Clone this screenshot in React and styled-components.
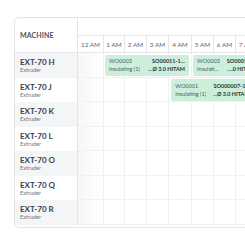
import styled, { createGlobalStyle } from 'styled-components';

const HOURS = ['12 AM', '1 AM', '2 AM', '3 AM', '4 AM', '5 AM', '6 AM', '7 AM', '8 AM', '9 AM'];
const HOUR_WIDTHS = [26, 21, 22, 22, 23, 22, 22, 22, 22, 22];

const MACHINES = ['EXT-70 H', 'EXT-70 J', 'EXT-70 K', 'EXT-70 L', 'EXT-70 O', 'EXT-70 Q', 'EXT-70 R'];

const JOBS = [
  { machine: 'EXT-70 H', start: 1.05, end: 4.87, wo: 'WO0003', op: 'Insulating (1)', so: 'SO00011-1…', item: '…Ø 3.0 HITAM' },
  { machine: 'EXT-70 H', start: 5.05, end: 8.05, wo: 'WO0003', op: 'Insulating (1)', so: 'SO00011-1…', item: '…Ø 3.0 HITAM' },
  { machine: 'EXT-70 J', start: 4.1, end: 7.8, wo: 'WO0001', op: 'Insulating (1)', so: 'SO000007-1…', item: '…Ø 3.0 HITAM' },
];

// hour (fractional) -> px from the left edge of the timeline
const hourToX = (h) => {
  const i = Math.floor(h);
  let x = 0;
  for (let k = 0; k < i; k++) x += HOUR_WIDTHS[k];
  return x + (h - i) * HOUR_WIDTHS[i];
};

const GlobalStyle = createGlobalStyle`
  body {
    margin: 0;
    background: #fff;
    overflow: hidden;
    font-family: Lato, "Noto Sans", sans-serif;
  }
`;

function App() {
  return (
    <>
      <GlobalStyle />
      <Page>
        <Schedule>
          <MachineHead>MACHINE</MachineHead>
          <TimeHead>
            <TopBand />
            <HourRow>
              {HOURS.map((h, i) => (
                <HourCell key={h} $w={HOUR_WIDTHS[i]}>{h}</HourCell>
              ))}
            </HourRow>
          </TimeHead>

          {MACHINES.map((m, idx) => (
            <Row key={m} m={m} striped={idx % 2 === 0} />
          ))}
        </Schedule>
      </Page>
    </>
  );
}

const Row = ({ m, striped }) => (
  <>
    <MachineCell $striped={striped}>
      <MachineName>{m}</MachineName>
      <MachineType>Extruder</MachineType>
    </MachineCell>
    <Lane>
      {HOUR_WIDTHS.map((w, i) => (
        <Slot key={i} $w={w} />
      ))}
      {JOBS.filter((j) => j.machine === m).map((j, i) => (
        <Job
          key={i}
          style={{ left: hourToX(j.start), width: hourToX(j.end) - hourToX(j.start) }}
        >
          <JobCol>
            <JobText>{j.wo}</JobText>
            <JobText>{j.op}</JobText>
          </JobCol>
          <JobCol $right>
            <JobText $bold>{j.so}</JobText>
            {/* cut from the start, so the end of the item name stays readable */}
            <JobText $bold $fromStart>{'\u200E' + j.item}</JobText>
          </JobCol>
        </Job>
      ))}
    </Lane>
  </>
);

export default App;

const Page = styled.div`
  padding: 17px 0 0 14px;
`;

const Schedule = styled.div`
  display: grid;
  grid-template-columns: 63px max-content;
  grid-template-rows: 35px repeat(7, 24.5px);
  width: max-content;
  padding-bottom: 2px;
  border: 1px solid #e1e4e9;
  border-radius: 5px;
  overflow: hidden;
  background: #fff;
`;

const MachineHead = styled.div`
  display: flex;
  align-items: center;
  box-sizing: border-box;
  padding-left: 5px;
  border-right: 1px solid #e1e4e9;
  border-bottom: 1px solid #e5e7eb;
  font-size: 7px;
  font-weight: 700;
  letter-spacing: 0.1px;
  color: #4a5364;
`;

const TimeHead = styled.div`
  display: flex;
  flex-direction: column;
`;

const TopBand = styled.div`
  height: 18px;
  box-sizing: border-box;
  border-bottom: 1px solid #e5e7eb;
`;

const HourRow = styled.div`
  display: flex;
  height: 17px;
  box-sizing: border-box;
  border-bottom: 1px solid #e5e7eb;
`;

const HourCell = styled.div`
  width: ${(p) => p.$w}px;
  flex: none;
  box-sizing: border-box;
  border-right: 1px solid #e5e7eb;
  display: flex;
  align-items: center;
  justify-content: center;
  font-size: 6.4px;
  color: #5b6474;
  white-space: nowrap;
`;

const MachineCell = styled.div`
  box-sizing: border-box;
  padding: 4px 0 0 5px;
  border-right: 1px solid #e1e4e9;
  background: ${(p) => (p.$striped ? '#f4f5f7' : '#fff')};
`;

const MachineName = styled.div`
  font-size: 8px;
  line-height: 10px;
  font-weight: 700;
  color: #364152;
`;

const MachineType = styled.div`
  font-size: 5.5px;
  line-height: 7px;
  color: #6b7280;
`;

const Lane = styled.div`
  position: relative;
  display: flex;
  box-sizing: border-box;
  border-bottom: 1px solid #f0f1f4;
  background: linear-gradient(90deg, rgba(30, 41, 59, 0.04), rgba(30, 41, 59, 0) 26px);
`;

const Slot = styled.div`
  width: ${(p) => p.$w}px;
  flex: none;
  box-sizing: border-box;
  border-right: 1px solid #f0f1f4;
`;

const Job = styled.div`
  position: absolute;
  top: 1.5px;
  height: 21.5px;
  box-sizing: border-box;
  padding: 0 4px;
  display: flex;
  align-items: center;
  justify-content: space-between;
  gap: 6px;
  border-radius: 2px;
  background: #ccefdb;
  overflow: hidden;
`;

const JobCol = styled.div`
  display: flex;
  flex-direction: column;
  min-width: 0;
  flex: 0 1 auto;
  text-align: ${(p) => (p.$right ? 'right' : 'left')};
`;

const JobText = styled.div`
  font-size: 5.5px;
  line-height: 8px;
  font-weight: ${(p) => (p.$bold ? 700 : 400)};
  color: ${(p) => (p.$bold ? '#2b3440' : '#4f5a66')};
  white-space: nowrap;
  overflow: hidden;
  text-overflow: ellipsis;
  direction: ${(p) => (p.$fromStart ? 'rtl' : 'ltr')};
`;
